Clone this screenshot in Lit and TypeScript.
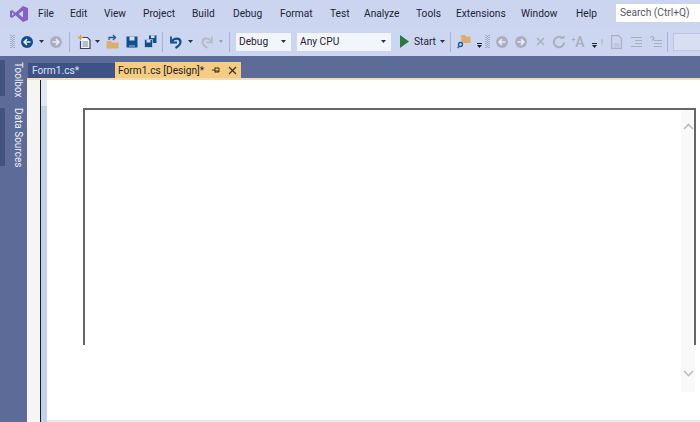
import { LitElement, html, css, svg } from "lit";
import { customElement } from "lit/decorators.js";
import { styleMap } from "lit/directives/style-map.js";

const MENU = ["File","Edit","View","Project","Build","Debug","Format","Test","Analyze","Tools","Extensions","Window","Help"];

const icon = (w: number, h: number, body: unknown) => html`<svg width=${w} height=${h} viewBox="0 0 ${w} ${h}">${body}</svg>`;

const circleArrow = (fill: string, dir: number) => icon(14, 14, svg`
  <circle cx="7" cy="7" r="6" fill=${fill}/>
  <path d=${dir < 0 ? "M10.5 7H4.5M7 4.2 4.2 7 7 9.8" : "M3.5 7H9.5M7 4.2 9.8 7 7 9.8"} fill="none" stroke="#e8ecf8" stroke-width="1.7"/>`);

const ICONS: Record<string, () => unknown> = {
  back: () => circleArrow("#0f4f8e", -1),
  fwd: () => circleArrow("#a9afbd", 1),
  cback: () => circleArrow("#a9afbd", -1),
  drop: () => icon(5, 3, svg`<path d="M0 0H5L2.5 3Z" fill="#2c3240"/>`),
  dropg: () => icon(5, 3, svg`<path d="M0 0H5L2.5 3Z" fill="#8d93a3"/>`),
  dropl: () => icon(5, 12, svg`<rect y="7" width="5" height="1" fill="#222"/><path d="M0 9H5L2.5 12Z" fill="#222"/>`),
  grip: () => icon(5, 16, svg`<path d="M1 1v14M4 1v14" stroke="#7c86a2" stroke-width="1" stroke-dasharray="1 1"/><path d="M2.5 2v12" stroke="#98a1b9" stroke-width="1" stroke-dasharray="1 1"/>`),
  sep: () => html`<span class="sep"></span>`,
  newp: () => icon(15, 16, svg`
    <path d="M5 3.5H10.5L13 6V14.5H3.5V7" fill="#f3f4f8" stroke="#3e4656" stroke-width="1.2"/>
    <path d="M5.5 8H11M5.5 10H11M5.5 12H11" stroke="#7d8494" stroke-width="1"/>
    <path d="M3.5 1V6M1 3.5H6" stroke="#d8a23e" stroke-width="1.3"/>`),
  open: () => icon(13, 15, svg`
    <path d="M.5 7H5L6 8.5H12.5V14.5H.5Z" fill="#dcae69"/>
    <path d="M3 6V3.5H9M7 1l2.5 2.5L7 6" fill="none" stroke="#1a5a96" stroke-width="1.3"/>`),
  save: () => icon(12, 12, svg`
    <path d="M0.5 0.5H11.5V11.5H0.5Z" fill="#0f4f8e"/>
    <rect x="3.5" y="0.5" width="5" height="4" fill="#d8def0"/><rect x="3" y="9" width="6" height="2.5" fill="#5e86b4"/>`),
  saveall: () => icon(13, 13, svg`
    <path d="M5 0.5H12.5V8H5Z" fill="#0f4f8e"/><rect x="7" y=".5" width="3.5" height="2.5" fill="#d8def0"/>
    <path d="M.5 4.5H8.5V12.5H.5Z" fill="#0f4f8e" stroke="#ccd5f0" stroke-width=".7"/><rect x="2.5" y="5" width="4" height="2.5" fill="#d8def0"/>`),
  undo: () => icon(12, 14, svg`<path d="M2 6.5C4 2.5 10.5 2.5 10.5 7C10.5 10 8 11.5 5.5 13" fill="none" stroke="#0f4f8e" stroke-width="2.2"/><path d="M1 1.5V7.5H7" fill="none" stroke="#0f4f8e" stroke-width="1.8"/>`),
  redo: () => icon(12, 14, svg`<path d="M10 6.5C8 2.5 1.5 2.5 1.5 7C1.5 10 4 11.5 6.5 13" fill="none" stroke="#b6bbc9" stroke-width="2"/><path d="M11 1.5V7.5H5" fill="none" stroke="#b6bbc9" stroke-width="1.6"/>`),
  play: () => icon(9, 13, svg`<path d="M0 0L9 6.5L0 13Z" fill="#2c7a3d"/>`),
  find: () => icon(14, 15, svg`
    <path d="M4 1H8L9 2.5H13.5V9H4.5Z" fill="#dcae69"/>
    <circle cx="3.5" cy="10.5" r="2" fill="none" stroke="#1a5a96" stroke-width="1.3"/><path d="M2.2 12 .8 14" stroke="#1a5a96" stroke-width="1.4"/>`),
  x: () => icon(9, 9, svg`<path d="M1 1 8 8M8 1 1 8" stroke="#a9afbd" stroke-width="1.5"/>`),
  refresh: () => icon(14, 14, svg`<path d="M10.5 3.2A5.2 5.2 0 1 0 12.2 7.5" fill="none" stroke="#a9afbd" stroke-width="2"/><path d="M8 3.8H12.5V0Z" fill="#a9afbd"/>`),
  doc: () => icon(11, 14, svg`<path d="M.6.6H7.5L10.4 3.5V13.4H.6Z" fill="none" stroke="#a9afbd" stroke-width="1.1"/><path d="M2.5 9H8.5M2.5 11H8.5" stroke="#b4bac8" stroke-width="1"/>`),
  indent: () => icon(11, 10, svg`<path d="M0 .5H11M4 3.5H11M4 6.5H11M0 9.5H11" stroke="#a9afbd" stroke-width="1"/>`),
  outdent: () => icon(13, 12, svg`<path d="M1 1.5 3.5 .5 5 2.5 3 4.5M5 4.5H13M5 7.5H13M5 10.5H13" stroke="#a9afbd" stroke-width="1.1" fill="none"/>`),
};

type Tool = [string, number, string?];
const TOOLS: Tool[] = [
  ["grip",9],["back",20],["drop",8],["fwd",22],["sep",4],["",4],["newp",19],["drop",6],["open",24],["save",15],["saveall",22],["sep",2],["",2],
  ["undo",21],["drop",8],["redo",25],["dropg",4],["sep",12],["",1],["combo",55,"Debug"],["",6],["combo",94,"Any CPU"],["",7],["play",13],["",3],
  ["start",22],["drop",12],["sep",4],["find",24],["dropl",6],["grip",11],["cback",18],["fwd",20],["x",18],["refresh",20],["auto",18],["dropl",14],["grip",2],["",3],
  ["doc",20],["indent",20],["outdent",18],["sep",6],["",3],["box",40],
];

@customElement("app-root")
export class AppRoot extends LitElement {
  static styles = css`
    :host { display: block; width: 700px; height: 422px; overflow: hidden; font-family: Roboto, "Open Sans", sans-serif; font-size: 10.2px; color: #1e2230; background: #ccd5f0; }
    .menubar { height: 27px; display: flex; align-items: center; }
    .logo { margin-left: 10px; width: 28px; flex: none; display: flex; }
    .menu { display: grid; grid-template-columns: 32px 34px 39px 49px 41px 47px 50px 34px 52px 40px 65px 55px 40px; flex: none; }
    .search { width: 84px; height: 18px; margin-top: -1px; background: #fff; box-sizing: border-box; padding-left: 4px; line-height: 18px; color: #555a66; flex: none; white-space: nowrap; overflow: hidden; }
    .toolbar { height: 29px; display: flex; align-items: center; padding-left: 8px; overflow: hidden; background: #cdd6f1; }
    .cell { flex: none; display: flex; align-items: center; justify-content: center; height: 29px; }
    .sep { display: block; flex: none; width: 1px; height: 20px; background: #a6b2cf; }
    .combo { height: 18px; background: #f3f5fc; display: flex; align-items: center; justify-content: space-between; padding: 0 5px 0 3px; box-sizing: border-box; }
    .combo svg { flex: none; }
    .start { justify-content: flex-start; white-space: nowrap; }
    .auto { color: #a9afbd; font-size: 14px; font-weight: 500; white-space: nowrap; }
    .auto small { font-size: 7px; vertical-align: 5px; }
    .box { width: 40px; height: 18px; background: #d9dff2; border: 1px solid #bcc6e0; box-sizing: border-box; }
    .main { height: 366px; display: flex; background: #5d6b99; }
    .side { width: 27px; flex: none; display: flex; flex-direction: column; gap: 12px; padding-top: 4px; }
    .vtab { box-sizing: border-box; border-left: 5px solid #44527f; writing-mode: vertical-rl; color: #eef1fa; font-size: 10px; line-height: 18px; white-space: nowrap; }
    .vtab.a { height: 36px; padding-top: 2px; }
    .vtab.b { height: 58px; }
    .content { flex: 1; display: flex; flex-direction: column; min-width: 0; }
    .tabs { height: 22px; flex: none; display: flex; align-items: flex-end; padding-left: 1px; }
    .tab { height: 16px; box-sizing: border-box; display: flex; align-items: center; }
    .tab.off { width: 87px; background: #3f5287; color: #d8e2f5; padding-left: 4px; height: 15px; }
    .tab.on { width: 126px; background: #f5cc84; color: #1e1e1e; padding-left: 3px; }
    .tab .name { flex: 1; white-space: nowrap; }
    .pin { margin-right: 8px; display: flex; }
    .close { margin-right: 4px; display: flex; }
    .accent { height: 2px; flex: none; background: #f6dcae; }
    .editor { flex: 1; display: flex; min-height: 0; background: #fff; }
    .gutter { width: 13px; flex: none; background: #f5f5f3; border-right: 1px solid #1c1c1c; }
    .bar { width: 6px; flex: none; background: linear-gradient(#dfe8f3 0, #dfe8f3 26px, #c0d3ea 26px); }
    .canvas { flex: 1; min-width: 0; box-sizing: border-box; border-bottom: 2px solid #e5e8e8; padding: 28px 4px 0 36px; }
    .form-wrap { position: relative; }
    .form { position: relative; z-index: 1; height: 237px; box-sizing: border-box; border: 2px solid #666; border-bottom: 0; }
    .track { position: absolute; top: 2px; right: 1px; width: 14px; height: 282px; background: #f9f9f9; display: flex; flex-direction: column; justify-content: space-between; align-items: center; padding: 13px 0 15px; box-sizing: border-box; }
  `;

  private tool([kind, w, label]: Tool) {
    const width = styleMap({ width: `${w}px` });
    if (kind === "combo") {
      return html`<div class="cell" style=${width}><div class="combo" style=${width}><span>${label}</span>${ICONS.drop()}</div></div>`;
    }
    if (kind === "start") return html`<div class="cell start" style=${width}>Start</div>`;
    if (kind === "auto") return html`<div class="cell" style=${width}><span class="auto"><small>+</small>A</span></div>`;
    if (kind === "box") return html`<div class="cell" style=${width}><div class="box"></div></div>`;
    return html`<div class="cell" style=${width}>${kind ? ICONS[kind]() : ""}</div>`;
  }

  render() {
    return html`
      <div class="menubar">
        <div class="logo">
          <svg width="18" height="16" viewBox="0 0 18 16"><path fill="#8661c5" d="M13 0 18 2V14L13 16 5.5 9.2 2 12 0 11V5L2 4 5.5 6.8ZM13 4.4 8.6 8 13 11.6ZM2 6.2V9.8L3.9 8Z"/></svg>
        </div>
        <div class="menu">${MENU.map((m) => html`<span>${m}</span>`)}</div>
        <div class="search">Search (Ctrl+Q)</div>
      </div>
      <div class="toolbar">${TOOLS.map((t) => this.tool(t))}</div>
      <div class="main">
        <div class="side">
          <div class="vtab a">Toolbox</div>
          <div class="vtab b">Data Sources</div>
        </div>
        <div class="content">
          <div class="tabs">
            <div class="tab off"><span class="name">Form1.cs*</span></div>
            <div class="tab on">
              <span class="name">Form1.cs [Design]*</span>
              <span class="pin"><svg width="8" height="8" viewBox="0 0 8 8"><path d="M0 4H3M3 1.5V6.5M3 2H7V6H3M3 5H7" fill="none" stroke="#3a3320" stroke-width="1"/></svg></span>
              <span class="close"><svg width="9" height="9" viewBox="0 0 9 9"><path d="M1 1 8 8M8 1 1 8" stroke="#3a3320" stroke-width="1.3"/></svg></span>
            </div>
          </div>
          <div class="accent"></div>
          <div class="editor">
            <div class="gutter"></div>
            <div class="bar"></div>
            <div class="canvas">
              <div class="form-wrap">
                <div class="form"></div>
                <div class="track">
                  <svg width="11" height="7" viewBox="0 0 11 7"><path d="M1 6 5.5 1.5 10 6" fill="none" stroke="#b9bcc8" stroke-width="1.6"/></svg>
                  <svg width="11" height="7" viewBox="0 0 11 7"><path d="M1 1 5.5 5.5 10 1" fill="none" stroke="#b9bcc8" stroke-width="1.6"/></svg>
                </div>
              </div>
            </div>
          </div>
        </div>
      </div>
    `;
  }
}
